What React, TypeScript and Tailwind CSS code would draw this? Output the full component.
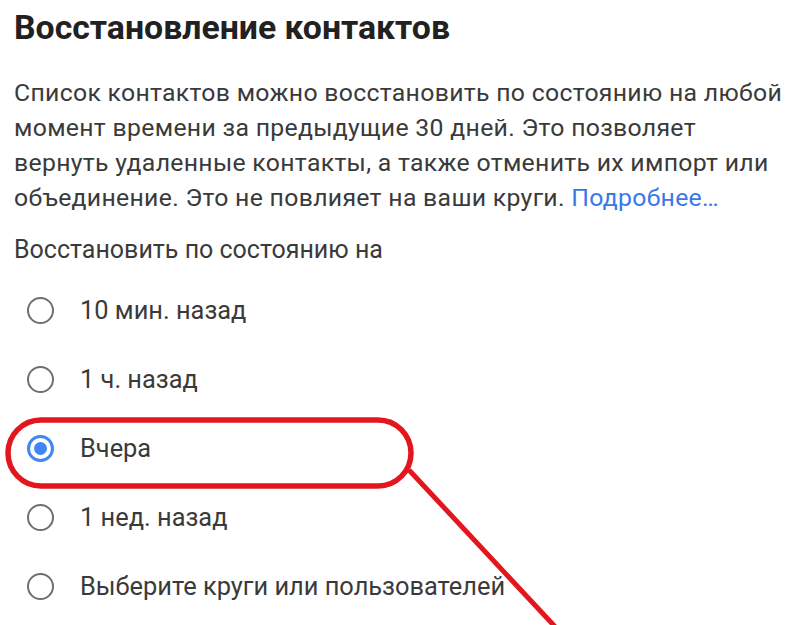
import { useState } from 'react';

const options = ['10 мин. назад', '1 ч. назад', 'Вчера', '1 нед. назад', 'Выберите круги или пользователей'];

function Radio({ checked }: { checked: boolean }) {
  return checked ? (
    <span className="w-[27px] h-[27px] rounded-full border-[3px] border-[#4285f4] flex items-center justify-center">
      <span className="w-[13px] h-[13px] rounded-full bg-[#4285f4]" />
    </span>
  ) : (
    <span className="w-[27px] h-[27px] rounded-full border-[2.5px] border-[#6f6f6f]" />
  );
}

export default function App() {
  const [selected, setSelected] = useState(2);

  return (
    <div className="relative w-[807px] h-[625px] overflow-hidden bg-white font-['Roboto',sans-serif]">
      <div className="pl-[14px] pt-[9px]">
        <h1 className="text-[33.8px] leading-[38px] font-bold text-[#212121]">Восстановление контактов</h1>

        <p className="mt-[28px] text-[24.8px] leading-[35px] tracking-[0.3px] text-[#3a3a3a] whitespace-nowrap">
          Список контактов можно восстановить по состоянию на любой
          <br />
          момент времени за предыдущие 30 дней. Это позволяет
          <br />
          вернуть удаленные контакты, а также отменить их импорт или
          <br />
          объединение. Это не повлияет на ваши круги.{' '}
          <a className="text-[#3b78e7]">Подробнее…</a>
        </p>

        <div className="mt-[17px] text-[25px] leading-[35px] text-[#3a3a3a]">Восстановить по состоянию на</div>

        <div className="mt-[9px] flex flex-col">
          {options.map((label, i) => (
            <button
              key={label}
              onClick={() => setSelected(i)}
              className="h-[69px] flex items-center text-left"
            >
              <span className="w-[66px] pl-[13px] flex items-center">
                <Radio checked={selected === i} />
              </span>
              <span className="text-[25.4px] leading-[35px] text-[#3a3a3a]">{label}</span>
            </button>
          ))}
        </div>
      </div>

      {/* red annotation drawn over the page */}
      <svg className="absolute inset-0 pointer-events-none" width="807" height="625" viewBox="0 0 807 625">
        <rect x="8" y="420" width="403" height="66" rx="33" fill="none" stroke="#e3161e" strokeWidth="5.5" />
        <line x1="409" y1="470" x2="560" y2="632" stroke="#e3161e" strokeWidth="5" />
      </svg>
    </div>
  );
}
